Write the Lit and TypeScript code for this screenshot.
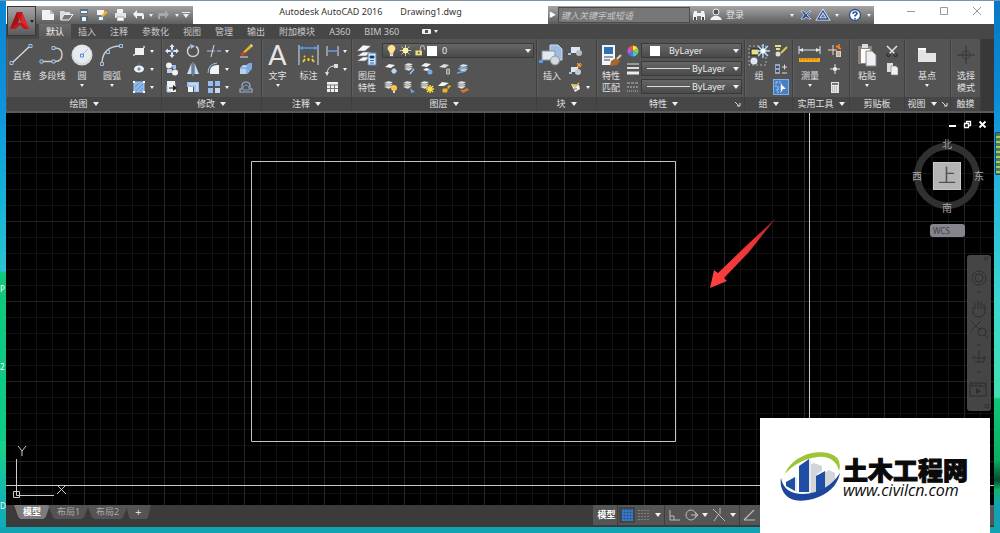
import { LitElement, html, svg, css, nothing } from "lit";
import { customElement, property } from "lit/decorators.js";

const W = "#f2f2f2";
const B = "#9cc3f0";
const Y = "#f0b323";

const sheets = (x: number, y: number) => svg`
  <path d="M${x} ${y + 6}l4-2 5 1-4 3zM${x} ${y + 4}l4-2 5 1-4 3zM${x} ${y + 2}l4-2 5 1-4 3z" fill="${W}" stroke="#555" stroke-width=".4"/>`;

const ICONS: Record<string, unknown> = {
  /* quick access */
  newFile: svg`<path d="M2 3h8l4 4v6H2z" fill="${W}"/><path d="M10 3v4h4" fill="#bbb"/>`,
  open: svg`<path d="M2 4h4l1 1h5v2H6l-3 6H2z" fill="#ddd"/><path d="M6 7.500h9l-4 5.500H3z" fill="#777" stroke="${W}"/>`,
  save: svg`<path d="M4 2h8v5H4z" fill="#5d7284"/><path d="M5 4h6v2H5z" fill="${W}"/><path d="M4 9h8v5H4z" fill="#50687c"/><path d="M6 10h4v4H6z" fill="${W}"/>`,
  saveAs: svg`<path d="M3 3h7v5H3z" fill="${W}"/><path d="M3 9h8v5H3z" fill="#667b8c"/><path d="M5 10h4v3H5z" fill="${W}"/><path d="M7 9l5-6 2 2-5 5z" fill="${Y}"/><path d="M12 3l2 2" stroke="#d44"/>`,
  print: svg`<path d="M5 2h6v4H5z" fill="${W}"/><path d="M3 6h11v5H3z" fill="#e4e4e4"/><path d="M5 10h7v4H5z" fill="#fff" stroke="#777" stroke-width=".6"/>`,
  undo: svg`<path d="M3 7l4-4v3h5q2 0 2 3v3h-2V9H7v3z" fill="${W}"/>`,
  redo: svg`<path d="M13 7L9 3v3H4Q2 6 2 9v3h2V9h5v3z" fill="#a8a8a8"/>`,
  /* draw */
  line: svg`<path d="M4 20L22 3" stroke="#ddd" stroke-width="1.300"/><path d="M2 18.500h3v3H2zM21 1.500h3v3h-3z" fill="#555" stroke="${B}"/>`,
  pline: svg`<path d="M4 18.500h13q7 0 7-7t-8-6.500" fill="none" stroke="#ccc" stroke-width="1.500"/><path d="M2 17h3v3H2zM14 17h3v3h-3zM14 3.500h3v3h-3z" fill="#555" stroke="${B}"/>`,
  circle: svg`<circle cx="14" cy="12" r="10.500" fill="#d6dade"/><circle cx="14" cy="11" r="9" fill="#e8ebee"/><path d="M14 12l6-6" stroke="${B}"/><path d="M12.500 11h3v3h-3z" fill="none" stroke="#4f8fd8"/>`,
  arc: svg`<path d="M4 21Q4 3 23 3" fill="none" stroke="#ccc" stroke-width="1.400"/><path d="M2.500 19.500h3v3h-3zM8.500 7.500h3v3h-3zM21.500 1.500h3v3h-3z" fill="#555" stroke="${B}"/>`,
  rect: svg`<path d="M4 5h9v7H4z" fill="${W}"/><path d="M2 11h2v2H2zM12 3h2v2h-2z" fill="${B}"/>`,
  ellipse: svg`<ellipse cx="8" cy="8" rx="5" ry="3.500" fill="${W}"/><path d="M8 6v4M6 8h4M8 2v2" stroke="#4c82c0"/>`,
  hatch: svg`<path d="M3 3h10v10H3z" fill="#8db7ec" stroke="${B}"/><path d="M5 12l7-7M4 8l4-4M9 12l3-3" stroke="#5f93d4"/><path d="M2 2h2v2H2zM12 2h2v2h-2zM2 12h2v2H2zM12 12h2v2h-2z" fill="#fff"/>`,
  /* modify */
  move: svg`<path d="M8 1l2.500 3H9v3h3V5.500L15 8l-3 2.500V9H9v3h1.500L8 15l-2.500-3H7V9H4v1.500L1 8l3-2.500V7h3V4H5.500z" fill="#dceaf8"/><path d="M6.500 6.500h3v3h-3z" fill="#5a8ac4"/>`,
  rotate: svg`<path d="M5 3.500A5.500 5.500 0 1 0 11 3.500" fill="none" stroke="#d0d0d0" stroke-width="1.500"/><path d="M5 1l5 2-4 3z" fill="${B}"/>`,
  trim: svg`<path d="M1 8h8M11 8h4" stroke="${B}"/><path d="M5 14l3-12" stroke="#ddd"/>`,
  erase: svg`<path d="M5 9l7-7 2 2-7 6z" fill="${Y}"/><path d="M12 2l1-1 2 2-1 1z" fill="#fff1bd"/><path d="M2 11l3-2 2 2-2 2z" fill="#d34334"/><path d="M2 14h8" stroke="#ddd"/>`,
  copy: svg`<circle cx="5" cy="4.500" r="3" fill="${W}"/><circle cx="11" cy="11.500" r="3" fill="${W}"/><path d="M8 4h4v4H9z" fill="${B}"/><path d="M3 8h5v4H3z" fill="#bcd4ee"/>`,
  mirror: svg`<path d="M6.500 2v11H2zM9.500 2v11H14z" fill="#c7dcf4"/><path d="M8 1v14" stroke="#7ca6da"/>`,
  fillet: svg`<path d="M4 13V9q1-5 8-5h1v9z" fill="${W}"/><path d="M2 12q0-9 9-10" fill="none" stroke="${B}"/>`,
  explode: svg`<path d="M2 7l3-3h6v7l-2 2H2z" fill="#b6d2f2"/><path d="M8 4l3-2h3v6l-3 3z" fill="#7aa9e2"/><path d="M2 7h7v6" fill="none" stroke="#6f93c0"/>`,
  stretch: svg`<path d="M3 2h8l1 11H3z" fill="${W}"/><path d="M5 9h5" stroke="#222"/><path d="M9 6l4 3-4 3z" fill="#222"/><path d="M3 6v7h4" fill="none" stroke="${B}"/>`,
  scale: svg`<path d="M2 3h12v10H9V8H2z" fill="${B}"/><path d="M3 8h5v5H3z" fill="${W}"/><path d="M4 5h8v7" fill="none" stroke="#eee"/>`,
  array: svg`<path d="M2 2h5v5H2zM9 2h5v5H9zM2 9h5v5H2z" fill="#94bdf0"/><path d="M9 9h5v5H9z" fill="#c9d8ea"/>`,
  offset: svg`<path d="M2 13V10h2V7q0-4 4-4t4 4v3h2v3z" fill="none" stroke="#9eb0c4" stroke-width="1.200"/><path d="M5 11h6V8q-3-4-6 0z" fill="none" stroke="#7d9cc2"/>`,
  /* annotation */
  dimension: svg`<path d="M4 2v20M23 2v20" stroke="#bfcbd8" stroke-width="1.200"/><path d="M5 5h17" stroke="#4c97ee" stroke-width="1.600"/><path d="M4 5l4-2v4zM23 5l-4-2v4z" fill="#4c97ee"/><path d="M8 19l2-3M13.500 15v3M19 19l-2-3M10 14l-1-1M17 14l1-1" stroke="#f5c533" stroke-width="2"/>`,
  linear: svg`<path d="M3 3v10M14 3v10" stroke="#ddd"/><path d="M3 8h11" stroke="#5d9eec" stroke-width="1.500"/>`,
  leader: svg`<path d="M3 14q0-9 7-9" fill="none" stroke="#ddd"/><path d="M1 11h4l-2 4zM10 3h4v4h-4z" fill="#ddd"/>`,
  table: svg`<path d="M3 3h11v10H3z" fill="${W}"/><path d="M3 6h11M3 9.500h11M6.500 6v7M10.500 6v7" stroke="#777"/>`,
  /* layers */
  layerProps: svg`<path d="M4 8l6-6 8 1-6 5zM4 13l6-4h8l-5 4zM4 18l6-4h7l-5 4z" fill="#f7f7f7" stroke="#666" stroke-width=".6"/><path d="M15 10h8v12h-8z" fill="#d6e7f7" stroke="#5d88b8"/><path d="M17 13h4v2h-4zM17 17.500h4M17 20h4" stroke="#2b66aa"/>`,
  bulb: svg`<path d="M5 9q-3-3-1-6 4-4 8 0 2 3-1 6l-1 3H6z" fill="#ffe28a"/><path d="M6 12h4v3H6z" fill="#ddd"/>`,
  sun: svg`<path d="M8 1v14M1 8h14M3 3l10 10M13 3L3 13" stroke="#e9e29a"/><circle cx="8" cy="8" r="3.500" fill="#fff3a8"/>`,
  lock: svg`<path d="M3 8h8v6H3z" fill="#f2dc7e"/><path d="M9 8V5q0-3 3-3 2 0 2 3v2" fill="none" stroke="#ddd"/><path d="M6 10h2v2H6z" fill="#555"/>`,
  lay1: svg`<path d="M2 6l4-3 6 1-4 3z" fill="${W}"/><circle cx="11" cy="10" r="2.500" fill="#a8ccf4"/><path d="M11 7v6M8 10h6" stroke="#d6e8fa" stroke-width=".6"/>`,
  lay2: svg`${sheets(3, 2)}<path d="M9 13l4-5" stroke="${B}" stroke-width="1.500"/>`,
  lay3: svg`<path d="M2 5l4-3 6 1-4 3zM4 9l3-2 4 1-3 2z" fill="${W}"/><circle cx="11" cy="11" r="2.500" fill="#78aae6"/>`,
  lay4: svg`<path d="M2 6l5-3 5 1-4 3z" fill="#ddd"/><path d="M9.500 8h3v5h-3z" fill="#7a8a7a" stroke="#bbb"/>`,
  lay5: svg`${sheets(4, 3)}<path d="M2 12l9-2M3 8l9-2" stroke="#69a2e4" stroke-width="1.500"/>`,
  lay6: svg`${sheets(1, 2)}<circle cx="11" cy="9" r="3" fill="#ffc348"/><path d="M10 12h2v2h-2z" fill="#ddd"/>`,
  lay7: svg`${sheets(2, 2)}<path d="M9 9l5 4-4 1z" fill="#68a0e8"/>`,
  lay8: svg`${sheets(1, 2)}<path d="M11 6v8M7 10h8M8 7l6 6M14 7l-6 6" stroke="#ffe23c" stroke-width="1.400"/>`,
  lay9: svg`<path d="M1 7l4-4 7 1-5 3z" fill="${W}"/><path d="M6 10h4v3H6zM11 10V7h3" fill="${Y}" stroke="${Y}"/>`,
  lay10: svg`${sheets(2, 2)}<path d="M5 11l3 3 6-3-2-2-4 2z" fill="#d8753a"/>`,
  /* block */
  insert: svg`<path d="M12 2h8l4 4v11H12z" fill="#9ebce0" stroke="#c9dcf0"/><path d="M4 8h13v9H4z" fill="#e2e9f1" stroke="#8794a2"/><circle cx="17" cy="17.500" r="4.500" fill="#d5d9dd" stroke="#88909a"/><path d="M1 17h4v3H1z" fill="#5c9be8"/>`,
  createBlock: svg`<path d="M4 4h9v6H4z" fill="#dbe6f2"/><circle cx="12" cy="10" r="3" fill="#bbb"/><path d="M1 11h3" stroke="${B}" stroke-width="2"/>`,
  editBlock: svg`<path d="M4 6h7v5H4z" fill="#dbe6f2"/><circle cx="11" cy="11" r="3" fill="#c5c9cd"/><path d="M12 2v5M10 4h5M10 2l4 4M14 2l-4 4" stroke="#ff9c2b"/><path d="M2 11h3v2H2z" fill="${B}"/>`,
  attrib: svg`<path d="M4 5l4 8 5-3-1-4z" fill="${W}"/><path d="M5 5l3 3 4-4" fill="none" stroke="#e4b93a" stroke-width="1.500"/><path d="M7 10h3" stroke="#666"/>`,
  /* properties */
  match: svg`<path d="M5 2h13v20H5z" fill="#f1f5f9"/><path d="M7 4h9v7H7z" fill="#3170b2"/><path d="M7 14h9M7 17h6" stroke="#345"/><path d="M14 18l5-3 4 3-3 4-7 1z" fill="#a9672f"/><path d="M20 16l4-4" stroke="#e8d0a0" stroke-width="2"/>`,
  wheel: svg`<path d="M8 8V2.500A5.500 5.500 0 0 1 12.800 5.200z" fill="#ffdc3d"/><path d="M8 8l4.800-2.800A5.500 5.500 0 0 1 12.800 10.800z" fill="#8bd24a"/><path d="M8 8l4.800 2.800A5.500 5.500 0 0 1 8 13.500z" fill="#46c7c2"/><path d="M8 8v5.500A5.500 5.500 0 0 1 3.200 10.800z" fill="#3d7fe0"/><path d="M8 8l-4.800 2.800A5.500 5.500 0 0 1 3.200 5.200z" fill="#c05ae0"/><path d="M8 8L3.200 5.200A5.500 5.500 0 0 1 8 2.500z" fill="#f2553a"/>`,
  weights: svg`<path d="M2 3h12" stroke="#ddd"/><path d="M2 7h12" stroke="#ddd" stroke-width="2"/><path d="M2 12h12" stroke="#eee" stroke-width="3"/>`,
  types: svg`<path d="M2 4h12" stroke="#bbb" stroke-dasharray="3 1"/><path d="M2 8h12" stroke="#bbb" stroke-dasharray="2 1"/><path d="M2 12h12" stroke="#bbb" stroke-dasharray="1 1"/>`,
  /* groups */
  group: svg`<path d="M4 3h17v19H4z" fill="none" stroke="#aaa" stroke-dasharray="2 2"/><path d="M6 6h8v6H6z" fill="#e8e37c" stroke="#222"/><circle cx="9" cy="18" r="3.500" fill="#dfe8ee"/><path d="M18 1v14M11 8h14M13 3l10 10M23 3L13 13" stroke="#b4dcff" stroke-width="1.400"/><circle cx="18" cy="8" r="2.500" fill="#fff"/>`,
  ungroup: svg`<path d="M2 3h6M3 6h4" stroke="#e8df7a" stroke-width="2"/><circle cx="5" cy="11" r="2.500" fill="#ddd"/><path d="M8 10l6-6" stroke="#d5c95c" stroke-width="2"/>`,
  groupEdit: svg`<path d="M2 3h5v10H2z" fill="#9aa6b4"/><path d="M3 5h3v2H3zM3 9h3v2H3z" fill="#2f4f78"/><path d="M9 6h5M11.500 3.500v5M9 12h5" stroke="#ddd"/>`,
  groupSel: svg`<path d="M3 3h5v5H3zM4 10h4v3H4z" fill="none" stroke="#9cc9f4" stroke-dasharray="2 1"/><path d="M8 5l5 5H10l-2 3z" fill="#fff"/>`,
  /* utilities */
  measure: svg`<path d="M3 7h21M3 3v8M24 3v8" stroke="#dfe5ea"/><path d="M3 7l4-2v4zM24 7l-4-2v4z" fill="#dfe5ea"/><path d="M3 15h21v4H3z" fill="#f4a91f"/><path d="M5 15v2M8 15v2M11 15v2M14 15v2M17 15v2M20 15v2" stroke="#8a5a0a" stroke-width=".7"/>`,
  quickSel: svg`<path d="M1 7h9M6 2v10" stroke="#f3d9b6"/><path d="M9 8h5v6H9z" fill="#dcd2c0"/><path d="M12 1v5M9 3l5 3" stroke="#f0872a" stroke-width="1.500"/><path d="M10 10h3M10 12h3" stroke="#777" stroke-width=".7"/>`,
  point: svg`<path d="M3 8h10M8 3v10" stroke="#ddd"/><circle cx="8" cy="8" r="2" fill="#eee"/>`,
  calc: svg`<path d="M4 3h8v11H4z" fill="#e4e4e4"/><path d="M5 4h6v2H5z" fill="#777"/><path d="M5 8h6M5 10h6M5 12h6" stroke="#999" stroke-dasharray="1 1"/>`,
  /* clipboard */
  paste: svg`<path d="M5 3h14v18H5z" fill="#8c8478"/><path d="M9 1h6v4H9z" fill="#ddd"/><path d="M8 6h9v14H8z" fill="#fff"/><path d="M13 8h6l4 4v11H13z" fill="#eef1f3" stroke="#888"/>`,
  cut: svg`<path d="M3 3l8 8M13 3l-8 8" stroke="#e4e4e4" stroke-width="1.500"/><circle cx="4.500" cy="12" r="1.600" fill="none" stroke="#222"/><circle cx="11.500" cy="12" r="1.600" fill="none" stroke="#222"/>`,
  copyClip: svg`<path d="M3 2h6v9H3z" fill="#ddd"/><path d="M7 5h5l2 2v7H7z" fill="${W}" stroke="#777" stroke-width=".6"/>`,
  base: svg`<path d="M5 5h8v5h10v9H5z" fill="#e4e4e4"/><path d="M5 5h8v2H5z" fill="#fff"/>`,
  touch: svg`<path d="M14 3v18M5 12h18" stroke="#333"/><circle cx="14" cy="12" r="4" fill="none" stroke="#3c3c3c"/>`,
  /* info centre */
  binoc: svg`<path d="M3 4h3v9H2V8zM10 4h3l1 4v5h-4zM6 6h4v3H6z" fill="${W}"/><path d="M3 10h2v3H3zM11 10h2v3h-2z" fill="#445"/>`,
  user: svg`<circle cx="8" cy="5" r="3" fill="#555" stroke="${W}"/><path d="M2 13q1-3 4-4h4q3 1 4 4z" fill="${W}"/>`,
  exchange: svg`<path d="M3 4l3 0 2 3 3-3h2l-4 4 4 4h-2l-3-2-2 2H3l3-4z" fill="#294e9c" stroke="#dfe7f5" stroke-width=".7"/>`,
  a360: svg`<path d="M8 4l5 8H3z" fill="none" stroke="#dfe7f5" stroke-width="3"/><path d="M8 4l5 8H3z" fill="none" stroke="#28509c" stroke-width="1.300"/>`,
  help: svg`<circle cx="8" cy="8" r="5.500" fill="#fff" stroke="#27508f" stroke-width="1.300"/><path d="M6 7q0-2 2-2t2 1.500q0 1-2 2v1M8 11v1.500" fill="none" stroke="#27508f" stroke-width="1.500"/>`,
  /* status bar */
  sGrid: svg`<path d="M4 2v12M7 2v12M10 2v12M13 2v12M3 4h11M3 7h11M3 10h11M3 13h11" stroke="#2b7fe0" stroke-width="1.300"/>`,
  sSnap: svg`<path d="M3 3v10M6 3v10M9 3v10M12 3v10" stroke="#aaa" stroke-dasharray="1 2"/>`,
  sOrtho: svg`<path d="M4 3v10h10M4 9h4v4" fill="none" stroke="#bbb"/>`,
  sPolar: svg`<circle cx="8" cy="8" r="5" fill="none" stroke="#bbb"/><path d="M8 8h6M12 5l3 3-3 3" fill="none" stroke="#bbb"/>`,
  sIso: svg`<path d="M2 2l12 12M9 1v6M7 8l-4 6" fill="none" stroke="#bbb"/>`,
  sTrack: svg`<path d="M3 13L13 3M3 13h11" fill="none" stroke="#bbb" stroke-width="1.200"/>`,
};

const small = (name: string) => html`<svg class="ic" viewBox="0 0 16 16" aria-hidden="true">${ICONS[name]}</svg>`;
const large = (name: string) => html`<svg class="big-ic" viewBox="0 0 28 24" aria-hidden="true">${ICONS[name]}</svg>`;

const base = css`
  button { appearance: none; border: 0; margin: 0; padding: 0; background: none; color: inherit; font: inherit; }
  .ic { display: block; flex: none; width: 16px; height: 16px; }
  .arrow { flex: none; width: 0; height: 0; border: 2px solid transparent; border-top: 3px solid #f0f0f0; border-bottom: 0; }
  .arrow.wide { border-width: 4px 3px 0; }
`;

@customElement("big-button")
class BigButton extends LitElement {
  @property() icon = "";
  @property() label = "";
  @property({ type: Boolean }) menu = false;
  static styles = [base, css`
    :host { display: block; flex: none; }
    .btn { display: flex; flex-direction: column; align-items: center; width: 100%; }
    .big-ic { display: block; width: 28px; height: 24px; margin-bottom: 3px; }
    .label { line-height: 12px; white-space: pre; }
    .letter { height: 24px; margin-bottom: 3px; font: 27px/24px Lato, sans-serif; color: #e6e6e6; }
    .arrow { margin-top: 2px; }
  `];
  render() {
    return html`<button class="btn">
      ${this.icon === "letter" ? html`<span class="letter">A</span>` : large(this.icon)}
      <span class="label">${this.label.replace("|", "\n")}</span>
      ${this.menu ? html`<span class="arrow"></span>` : nothing}
    </button>`;
  }
}

@customElement("ribbon-panel")
class RibbonPanel extends LitElement {
  @property() label = "";
  @property({ type: Boolean }) menu = false;
  @property({ type: Boolean }) launcher = false;
  static styles = [base, css`
    :host { display: flex; flex-direction: column; flex: none; box-sizing: border-box; border-right: 1px solid #3f3f3f; box-shadow: inset 1px 0 #5e5e5e; }
    .body { display: flex; height: 58px; padding-top: 4px; box-sizing: border-box; }
    .title { display: flex; align-items: center; justify-content: center; gap: 5px; height: 14px; background: #464646; line-height: 14px; white-space: nowrap; }
    .corner { width: 6px; height: 6px; }
    .corner.end { margin-left: auto; margin-right: 3px; }
    .lead { margin-left: auto; }
  `];
  render() {
    const spread = this.launcher && this.offsetWidth > 100;
    return html`<div class="body"><slot></slot></div>
      <div class="title">
        <span class=${spread ? "lead" : ""}>${this.label}</span>${this.menu ? html`<span class="arrow wide"></span>` : nothing}
        ${this.launcher ? html`<svg class="corner ${spread ? "end" : ""}" viewBox="0 0 6 6"><path d="M0 1l4 4M5 2v3H2" stroke="#ddd" fill="none"/></svg>` : nothing}
      </div>`;
  }
}

type Tool = [string, boolean?];
const DRAW: Tool[] = [["rect", true], ["ellipse", true], ["hatch", true]];
const MODIFY: Tool[] = [
  ["move"], ["rotate"], ["trim", true], ["erase"],
  ["copy"], ["mirror"], ["fillet", true], ["explode"],
  ["stretch"], ["scale"], ["array", true], ["offset"],
];
const LAYERS: Tool[] = [1, 2, 3, 4, 5, 6, 7, 8, 9, 10].map((n): Tool => [`lay${n}`]);

@customElement("app-root")
class AppRoot extends LitElement {
  static styles = [base, css`
    :host {
      display: block; position: relative; box-sizing: border-box; height: 100vh; overflow: hidden;
      padding: 1px 6px 6px; color: #e0e0e0;
      font: 9px/12px "Noto Sans", "Noto Sans CJK SC", sans-serif;
      background:
        linear-gradient(#12a3b2, #12a3b2) left bottom / 100% 6px no-repeat,
        linear-gradient(#7c93a3, #7c93a3) left top / 100% 1px no-repeat,
        linear-gradient(#0a86d4 0, #0f92da 100px, #14b4d8 200px, #2cc4d0 271px, #10c87c 273px, #0ccc88 440px, #18d488 442px, #12b4b0 500px, #10a8bc 533px) left top / 6px 100% no-repeat,
        linear-gradient(#0878c8 0, #0a8cdc 100px, #22b4dc 180px, #38d8d0 300px, #40e0b0 397px, #0cc878 399px, #08b060 460px, #064d30 480px, #12b468 490px, #12a3b2 505px) right top / 6px 100% no-repeat;
    }
    .desk { position: absolute; left: 0; width: 6px; color: #fff; font-size: 8px; line-height: 12px; }
    .d1 { top: 283px; } .d2 { top: 361px; } .d3 { top: 500px; }
    .gadget { position: absolute; right: 0; top: 132px; width: 5px; height: 43px; box-sizing: border-box; border: 1px solid #26466c; border-right: 0; border-radius: 2px 0 0 2px; background: repeating-linear-gradient(#4a7a5c 0 3px, #a6d04e 3px 5px); }
    .window { display: flex; flex-direction: column; height: 100%; background: #fff; }

    .titlebar { display: flex; align-items: stretch; flex: none; height: 18px; padding: 5px 0 0 1px; }
    .app { position: relative; z-index: 2; display: flex; align-items: center; justify-content: center; gap: 1px; flex: none; width: 29px; height: 30px; box-sizing: border-box; border: 1px solid #383838; background: linear-gradient(#a4a4a4, #5b5b5b); }
    .logo { width: 19px; height: 20px; }
    .app .arrow { border-top-color: #222; }
    .quick { display: flex; align-items: center; flex: none; width: 157px; box-sizing: border-box; padding-left: 4px; gap: 2px; background: linear-gradient(#a2a2a2, #5e5e5e); }
    .quick .arrow { margin: 0 1px; }
    .more-cmds { display: flex; flex-direction: column; align-items: center; gap: 1px; border-top: 1px solid #f0f0f0; padding-top: 1px; }
    .doc { flex: 1; display: flex; justify-content: center; gap: 18px; color: #333; line-height: 12px; white-space: nowrap; }
    .info { display: flex; align-items: center; flex: none; width: 326px; box-sizing: border-box; gap: 1px; background: linear-gradient(#a4a4a4, #5c5c5c); }
    .play { width: 9px; color: #fff; text-align: center; font-size: 7px; }
    .search { width: 132px; height: 16px; box-sizing: border-box; margin: 0; padding: 0 2px; border: 1px solid #4b4b4b; background: #777; color: #eee; font: italic 9px/14px "Noto Sans CJK SC", sans-serif; }
    .search::placeholder { color: #c8c8c8; opacity: 1; }
    .login { display: flex; align-items: center; gap: 2px; }
    .grow { flex: 1; }
    .info .arrow { margin: 0 3px; }
    .info .help { margin-left: 4px; }
    .winctl { display: flex; align-items: flex-start; flex: none; width: 120px; padding-left: 20px; box-sizing: border-box; }
    .winctl button { flex: 1; }
    .winctl svg { display: block; width: 10px; height: 10px; margin: 0 auto; }

    .tabs { display: flex; flex: none; height: 15px; padding-left: 33px; background: #474747; color: #c8c8c8; line-height: 15px; }
    .tab { padding: 0 7px; white-space: nowrap; }
    .tab.on { background: linear-gradient(#6a6a6a, #555); color: #f2f2f2; }
    .more { display: flex; align-items: center; gap: 3px; margin-left: 16px; }
    .cam { width: 9px; height: 5px; border-radius: 1px; box-sizing: border-box; border: 2px solid #eee; border-width: 1px 3px; background: #555; }

    .ribbon { display: flex; flex: none; height: 72px; padding-left: 1px; background: linear-gradient(to right, #545454 calc(100% - 14px), #383838 calc(100% - 14px)); border-bottom: 2px solid #5a5a5a; overflow: hidden; }
    .p-draw { width: 155px; } .p-mod { width: 100px; } .p-note { width: 90px; } .p-layer { width: 185px; }
    .p-block { width: 60px; } .p-prop { width: 148px; } .p-group { width: 48px; } .p-util { width: 57px; }
    .p-clip { width: 55px; } .p-view { width: 46px; } .p-touch { width: 30px; }
    .w28 { width: 28px; } .w30 { width: 30px; } .w31 { width: 31px; } .w34 { width: 34px; } .w44 { width: 44px; }
    .tools { display: grid; grid-auto-rows: 16px; row-gap: 2px; align-content: start; }
    .tool { display: flex; align-items: center; gap: 3px; height: 16px; }
    .tool.on { background: #4a7ec4; box-shadow: inset 0 0 0 1px #7fb0ea; }
    .after { margin-left: 4px; }
    .mod { grid-template-columns: 21px 21px 32px 16px; padding-left: 2px; }
    .layers { flex: 1; padding-right: 2px; }
    .lay { grid-template-columns: repeat(5, 16px); column-gap: 2px; padding-left: 1px; margin-top: 3px; }
    .combo { display: flex; align-items: center; height: 15px; box-sizing: border-box; border: 1px solid #3a3a3a; background: linear-gradient(#666, #4a4a4a); padding: 0 2px; gap: 1px; }
    .combo select { appearance: none; flex: 1; min-width: 0; height: 13px; margin: 0; padding: 0 0 0 4px; border: 0; background: none; color: #eee; font: 9px/13px "Noto Sans", sans-serif; }
    .combo .ic { width: 13px; height: 13px; }
    .swatch { flex: none; width: 10px; height: 10px; background: #fff; }
    .rule { flex: none; width: 43px; height: 1px; background: #ddd; }
    .props { display: grid; grid-template-columns: 16px 101px; grid-auto-rows: 15px; row-gap: 3px; align-content: start; }
    .props .swatch { margin: 0 4px 0 6px; }
    .props .ruled { padding-left: 5px; }
    .props .ruled select { padding-left: 1px; }

    .canvas { position: relative; flex: 1; min-height: 0; overflow: hidden; background-color: #000;
      background-image:
        linear-gradient(to right, #23272a 1px, transparent 1px), linear-gradient(#1f2326 1px, transparent 1px),
        linear-gradient(to right, #101214 1px, transparent 1px), linear-gradient(#101214 1px, transparent 1px);
      background-size: 80px 80px, 80px 80px, 16px 16px, 16px 16px;
      background-position: 78px 28px; }
    .drawing { position: absolute; inset: 0; width: 100%; height: 100%; }
    .docctl { position: absolute; right: 7px; top: 7px; display: flex; gap: 6px; }
    .docctl svg { display: block; width: 9px; height: 9px; }
    .cube { position: absolute; right: 8px; top: 24px; width: 78px; height: 78px; color: #aaa; font-size: 10px; line-height: 12px; text-align: center; display: grid; grid-template: 14px 1fr 14px / 14px 1fr 14px; align-items: center; }
    .ring { position: absolute; inset: 6px; border: 7px solid #303030; border-radius: 50%; }
    .cube span, .face { position: relative; }
    .n, .s { grid-column: 1 / 4; } .w { grid-column: 1; text-align: right; } .e { grid-column: 3; }
    .face { justify-self: center; width: 28px; height: 28px; background: #b4b4b4; box-shadow: inset 0 0 0 1px #c8c8c8; color: #4c5058; font-size: 18px; line-height: 26px; }
    .wcs { position: absolute; right: 29px; top: 111px; width: 35px; height: 13px; border-radius: 3px; background: #85858b; color: #42424a; font-size: 8px; line-height: 12px; text-align: left; padding-left: 3px; }
    .nav { position: absolute; right: 3px; top: 142px; width: 24px; height: 156px; border-radius: 3px; background: #454545; }

    .status { display: flex; flex: none; height: 22px; background: #3b3b3b; color: #b0b0b0; }
    .sheets { display: flex; align-items: flex-start; padding-left: 8px; }
    .sheet { width: 41px; height: 14px; margin-right: -2px; line-height: 14px; background: #545454; clip-path: polygon(0 0, 100% 0, 88% 85%, 82% 100%, 18% 100%, 12% 85%); color: #aaa; }
    .sheet.on { background: #7c7c7c; color: #fff; font-weight: 700; width: 36px; }
    .sheet.add { width: 25px; color: #ddd; font-size: 11px; }
    .modes { display: flex; align-items: center; width: 401px; margin-left: auto; box-sizing: border-box; height: 20px; padding-left: 4px; background: #555; gap: 1px; color: #fff; }
    .modes .name { width: 19px; font-weight: 700; white-space: nowrap; }
    .modes .arrow { margin: 0 2px; }
    .sep { width: 1px; height: 100%; background: #3d3d3d; }
    .on-blue { background: #444; }

    .brand { position: absolute; z-index: 3; right: 10px; bottom: 0; display: flex; align-items: center; width: 230px; height: 115px; box-sizing: border-box; padding: 3px 0 0 20px; background: #fff; color: #0a0a0a; gap: 1px; }
    .brand svg { flex: none; width: 62px; height: 52px; }
    .brand .cn { font: 900 25px/26px "Noto Sans CJK SC", sans-serif; -webkit-text-stroke: 1px #0a0a0a; white-space: nowrap; }
    .brand .url { font: italic 500 16px/16px "Open Sans", "Noto Sans", sans-serif; white-space: nowrap; }
  `];

  private tools(list: Tool[], cls = "") {
    return html`<div class="tools ${cls}">
      ${list.map(([name, menu]) => html`<button class="tool ${name === "groupSel" ? "on" : ""}" aria-label=${name}>${small(name)}${menu ? html`<span class="arrow"></span>` : nothing}</button>`)}
    </div>`;
  }

  private titlebar() {
    return html`<header class="titlebar">
      <button class="app" aria-label="menu">
        <svg class="logo" viewBox="0 0 19 20"><path d="M7 1h5l7 17h-5l-4-4-5 4H0z" fill="#c3161c"/><path d="M7 1L0 18l9-7z" fill="#a31217"/><path d="M9.500 7l-1.500 5h3z" fill="#777"/><path d="M12 1l7 17-8-7z" fill="#e0282c"/></svg>
        <span class="arrow"></span>
      </button>
      <div class="quick">
        ${["newFile", "open", "save", "saveAs", "print", "undo"].map((n) => html`<button aria-label=${n}>${small(n)}</button>`)}
        <span class="arrow"></span>
        <button aria-label="redo">${small("redo")}</button>
        <span class="arrow"></span>
        <button class="more-cmds" aria-label="more commands"><span class="arrow wide"></span></button>
      </div>
      <div class="doc"><span>Autodesk AutoCAD 2016</span><span>Drawing1.dwg</span></div>
      <div class="info">
        <button class="play" aria-label="collapse">▶</button>
        <input class="search" aria-label="search" placeholder="键入关键字或短语">
        <button aria-label="find">${small("binoc")}</button>
        <button class="login">${small("user")}<span>登录</span></button>
        <span class="grow"></span><span class="arrow"></span>
        <button aria-label="exchange">${small("exchange")}</button>
        <button aria-label="a360">${small("a360")}</button><span class="arrow"></span>
        <button class="help" aria-label="help">${small("help")}</button><span class="arrow"></span>
      </div>
      <div class="winctl">
        <button aria-label="minimize"><svg viewBox="0 0 10 10"><path d="M1 5.500h8" stroke="#999"/></svg></button>
        <button aria-label="maximize"><svg viewBox="0 0 10 10"><path d="M1.500 1.500h7v7h-7z" fill="none" stroke="#999"/></svg></button>
        <button aria-label="close"><svg viewBox="0 0 10 10"><path d="M1 1l8 8M9 1L1 9" stroke="#999"/></svg></button>
      </div>
    </header>`;
  }

  private ribbon() {
    const down = html`<span class="arrow wide"></span>`;
    return html`<section class="ribbon">
      <ribbon-panel class="p-draw" label="绘图" menu>
        <big-button class="w30" icon="line" label="直线"></big-button>
        <big-button class="w30" icon="pline" label="多段线"></big-button>
        <big-button class="w30" icon="circle" label="圆" menu></big-button>
        <big-button class="w30" icon="arc" label="圆弧" menu></big-button>
        ${this.tools(DRAW, "after")}
      </ribbon-panel>
      <ribbon-panel class="p-mod" label="修改" menu>${this.tools(MODIFY, "mod")}</ribbon-panel>
      <ribbon-panel class="p-note" label="注释" menu>
        <big-button class="w31" icon="letter" label="文字" menu></big-button>
        <big-button class="w31" icon="dimension" label="标注"></big-button>
        ${this.tools([["linear", true], ["leader", true], ["table"]])}
      </ribbon-panel>
      <ribbon-panel class="p-layer" label="图层" menu>
        <big-button class="w30" icon="layerProps" label="图层|特性"></big-button>
        <div class="layers">
          <div class="combo">${small("bulb")}${small("sun")}${small("lock")}<span class="swatch"></span>
            <select aria-label="图层"><option>0</option></select>${down}</div>
          ${this.tools(LAYERS, "lay")}
        </div>
      </ribbon-panel>
      <ribbon-panel class="p-block" label="块" menu>
        <big-button class="w30" icon="insert" label="插入"></big-button>
        ${this.tools([["createBlock"], ["editBlock"], ["attrib", true]])}
      </ribbon-panel>
      <ribbon-panel class="p-prop" label="特性" menu launcher>
        <big-button class="w28" icon="match" label="特性|匹配"></big-button>
        <div class="props">
          ${small("wheel")}<div class="combo"><span class="swatch"></span><select aria-label="颜色"><option>ByLayer</option></select>${down}</div>
          ${small("weights")}<div class="combo ruled"><span class="rule"></span><select aria-label="线宽"><option>ByLayer</option></select>${down}</div>
          ${small("types")}<div class="combo ruled"><span class="rule"></span><select aria-label="线型"><option>ByLayer</option></select>${down}</div>
        </div>
      </ribbon-panel>
      <ribbon-panel class="p-group" label="组" menu>
        <big-button class="w28" icon="group" label="组"></big-button>
        ${this.tools([["ungroup"], ["groupEdit"], ["groupSel"]])}
      </ribbon-panel>
      <ribbon-panel class="p-util" label="实用工具" menu>
        <big-button class="w34" icon="measure" label="测量" menu></big-button>
        ${this.tools([["quickSel"], ["point"], ["calc"]])}
      </ribbon-panel>
      <ribbon-panel class="p-clip" label="剪贴板">
        <big-button class="w34" icon="paste" label="粘贴" menu></big-button>
        ${this.tools([["cut"], ["copyClip"]])}
      </ribbon-panel>
      <ribbon-panel class="p-view" label="视图" menu launcher>
        <big-button class="w44" icon="base" label="基点" menu></big-button>
      </ribbon-panel>
      <ribbon-panel class="p-touch" label="触摸">
        <big-button class="w30" icon="touch" label="选择|模式"></big-button>
      </ribbon-panel>
    </section>`;
  }

  private canvas() {
    return html`<main class="canvas">
      <svg class="drawing" aria-hidden="true">
        <defs><linearGradient id="fade" x1="1" y1="0" x2="0" y2="1"><stop offset="0" stop-color="#7a1c1c"/><stop offset=".3" stop-color="#e83434"/><stop offset="1" stop-color="#ff4040"/></linearGradient></defs>
        <path d="M803.500 0V393M0 372.500H988" stroke="#c8c8c8"/>
        <path d="M245.500 48.500h424v280h-424z" fill="none" stroke="#c4c4c4"/>
        <path d="M704 175l4-18 4 3 28-27 30-28-27 34-25 26 3 3z" fill="url(#fade)"/>
        <path d="M10.500 346V382.500H48M7.500 378.500h6v6h-6z" fill="none" stroke="#ccc"/>
        <path d="M12 333l4 5 4-5M16 338v5M51 372l9 9M60 372l-9 9" fill="none" stroke="#ccc"/>
      </svg>
      <div class="docctl">
        <button aria-label="minimize"><svg viewBox="0 0 9 9"><path d="M1 6h7" stroke="#fff" stroke-width="2"/></svg></button>
        <button aria-label="restore"><svg viewBox="0 0 9 9"><path d="M1.500 3.500h4v4h-4zM3.500 3V1.500h4v4H6" fill="none" stroke="#fff" stroke-width="1.300"/></svg></button>
        <button aria-label="close"><svg viewBox="0 0 9 9"><path d="M1.500 1.500l6 6M7.500 1.500l-6 6" stroke="#fff" stroke-width="1.800"/></svg></button>
      </div>
      <div class="cube">
        <div class="ring"></div>
        <span class="n">北</span><span class="w">西</span><div class="face">上</div><span class="e">东</span><span class="s">南</span>
      </div>
      <button class="wcs">WCS</button>
      <svg class="nav" viewBox="0 0 24 156" aria-hidden="true">
        <g fill="none" stroke="#2e2e2e">
          <path d="M17 2l4 3M21 2l-4 3"/><circle cx="12" cy="23" r="7"/><circle cx="12" cy="23" r="4"/>
          <path d="M10 37h4M6 52v6q1 4 6 4t6-4v-7M8 54v-6M11 54v-8M14 54v-7M17 54v-5"/>
          <path d="M4 66l10 10M14 66L4 76"/><circle cx="15" cy="77" r="4"/><path d="M18 80l3 3M10 90h4"/>
          <path d="M5 103h14M12 95v13M5 103l3-3M19 103l-3-3M8 107h9v-4M10 117h4"/>
          <path d="M3 128h16v13H3zM3 131h16M5 128v3M9 128v3M13 128v3"/><circle cx="20" cy="151" r="2"/>
        </g>
        <path d="M9 133l5 3-5 3z" fill="#2e2e2e"/>
      </svg>
    </main>`;
  }

  render() {
    const tabs = ["默认", "插入", "注释", "参数化", "视图", "管理", "输出", "附加模块", "A360", "BIM 360"];
    return html`
      <span class="desk d1">P</span><span class="desk d2">2</span><span class="desk d3">D</span>
      <div class="gadget"></div>
      <div class="window">
        ${this.titlebar()}
        <nav class="tabs" role="tablist">
          ${tabs.map((t, i) => html`<button class="tab ${i ? "" : "on"}" role="tab">${t}</button>`)}
          <button class="more" aria-label="more"><span class="cam"></span><span class="arrow"></span></button>
        </nav>
        ${this.ribbon()}
        ${this.canvas()}
        <footer class="status">
          <div class="sheets">
            <button class="sheet on">模型</button><button class="sheet">布局1</button><button class="sheet">布局2</button><button class="sheet add">+</button>
          </div>
          <div class="modes">
            <button class="name">模型</button><span class="sep"></span>
            <button class="on-blue" aria-label="grid">${small("sGrid")}</button>
            <button aria-label="snap">${small("sSnap")}</button><span class="arrow wide"></span><span class="sep"></span>
            <button aria-label="ortho">${small("sOrtho")}</button>
            <button aria-label="polar">${small("sPolar")}</button><span class="arrow wide"></span>
            <button aria-label="iso">${small("sIso")}</button><span class="arrow wide"></span><span class="sep"></span>
            <button aria-label="track">${small("sTrack")}</button>
          </div>
        </footer>
      </div>
      <aside class="brand">
        <svg viewBox="0 0 62 52" aria-hidden="true">
          <path d="M30 14l4-2 8 3v5l-5 3v19h-7zM45 21l4-2 6 3v13l-10 6z" fill="#d2d5d9"/>
          <path d="M6 31l9-5v14l-9-5zM19 15l10-7v33H19zM36 25l9-5v18l-9 4z" fill="#1f4ea4"/>
          <path d="M15 26l2 1v14l-2-1zM29 8l2 2v31h-2z" fill="#e7e9ec"/>
          <path d="M5 23C12 6 32-1 48 2q15 4 11 18C57 10 49 5 38 6 24 7 12 15 5 23z" fill="#9cc434"/>
          <path d="M1 27q3 16 22 16 24-1 37-21Q56 41 33 48 8 54 2 38q-2-5-1-11z" fill="#1b469c"/>
        </svg>
        <div><div class="cn">土木工程网</div><div class="url">www.civilcn.com</div></div>
      </aside>`;
  }
}
